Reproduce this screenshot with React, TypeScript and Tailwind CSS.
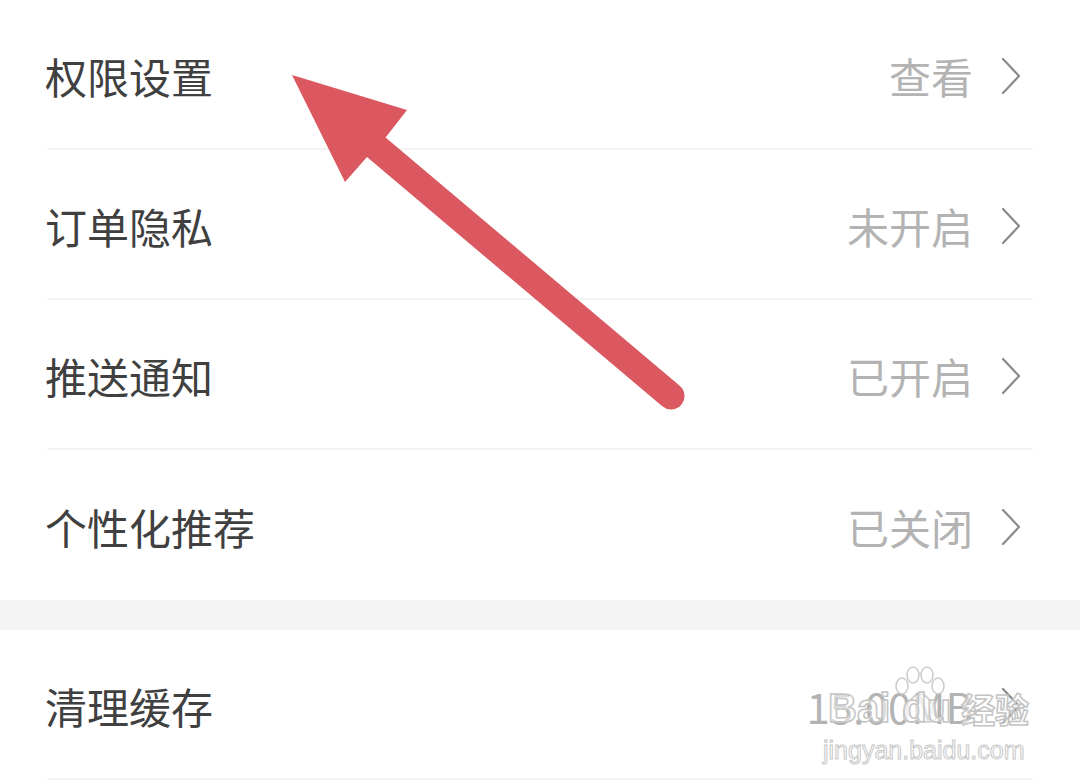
import React from "react";

const rows = [
  { label: "权限设置", value: "查看" },
  { label: "订单隐私", value: "未开启" },
  { label: "推送通知", value: "已开启" },
  { label: "个性化推荐", value: "已关闭" },
];

function Chevron() {
  return (
    <svg width="22" height="38" viewBox="0 0 22 38" className="shrink-0">
      <path d="M3 2 L19 19 L3 36" fill="none" stroke="#8a8a8a" strokeWidth="2.2" strokeLinecap="round" strokeLinejoin="round" />
    </svg>
  );
}

function Row({ label, value, last }: { label: string; value: string; last?: boolean }) {
  return (
    <div className="px-[47px]">
      <div className={`h-[150px] pt-[4px] flex items-center justify-between ${last ? "" : "border-b-2 border-[#f4f4f4]"}`}>
        <span className="text-[42px] text-[#404040] -ml-[2px] leading-none">{label}</span>
        <div className="flex items-center gap-[27px] mr-[11px]">
          <span className="text-[42px] text-[#b3b3b3] leading-none">{value}</span>
          <Chevron />
        </div>
      </div>
    </div>
  );
}

// Red annotation arrow over the list
function Arrow() {
  return (
    <svg className="absolute left-0 top-0 pointer-events-none" width="1080" height="784" viewBox="0 0 1080 784">
      <line x1="376" y1="147" x2="671" y2="396" stroke="#db5860" strokeWidth="27" strokeLinecap="round" />
      <polygon points="292,75 407,110 386,137 367,157 345,182" fill="#db5860" />
    </svg>
  );
}

function Watermark() {
  return (
    <div className="absolute left-[826px] top-[664px] w-[210px] h-[110px] pointer-events-none">
      <svg className="absolute left-[68px] top-[2px]" width="52" height="58" viewBox="0 0 52 58">
        <g fill="rgba(255,255,255,0.55)" stroke="#cacaca" strokeWidth="1.5">
          <ellipse cx="8" cy="20" rx="6" ry="8" />
          <ellipse cx="19" cy="9" rx="6" ry="8" />
          <ellipse cx="33" cy="9" rx="6" ry="8" />
          <ellipse cx="44" cy="20" rx="6" ry="8" />
          <path d="M26 28 C18 28 8 44 10 52 C12 58 20 56 26 55 C32 56 40 58 42 52 C44 44 34 28 26 28 Z" />
        </g>
      </svg>
      <div className="absolute left-[2px] top-[24px] flex items-end text-[40px] leading-none font-bold text-[rgba(255,255,255,0.55)] [-webkit-text-stroke:1.5px_#c4c4c4] [font-family:'Liberation_Sans','Noto_Sans_CJK_SC',sans-serif]">
        <span>Bai</span>
        <span className="ml-[12px]">du</span>
        <span className="ml-[10px] text-[34px]">经验</span>
      </div>
      <div className="absolute left-[-3px] top-[74px] text-[25px] leading-none text-[rgba(255,255,255,0.6)] [-webkit-text-stroke:1px_#c8c8c8] [font-family:'Liberation_Sans',sans-serif]">
        jingyan.baidu.com
      </div>
    </div>
  );
}

export default function App() {
  return (
    <div className="relative w-[1080px] h-[784px] overflow-hidden bg-white [font-family:'Noto_Sans_CJK_SC','Noto_Sans',sans-serif]">
      <div>
        {rows.map((r, i) => (
          <Row key={r.label} label={r.label} value={r.value} last={i === rows.length - 1} />
        ))}
        <div className="h-[30px] bg-[#f3f3f3]" />
        <Row label="清理缓存" value="15.00MB" />
      </div>
      <Arrow />
      <Watermark />
    </div>
  );
}
